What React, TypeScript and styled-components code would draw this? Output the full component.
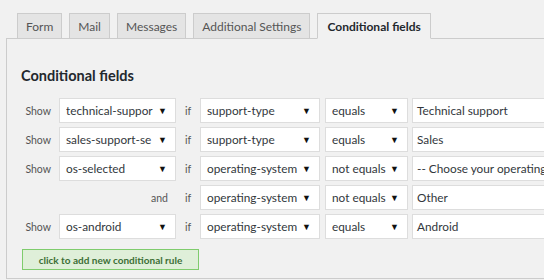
import React from 'react';
import styled, { createGlobalStyle } from 'styled-components';

const Global = createGlobalStyle`
  html, body { margin: 0; padding: 0; background: #f1f1f1; overflow: hidden; }
  body { width: 544px; height: 280px; font-family: Lato, "Open Sans", sans-serif; }
`;

const Page = styled.div`
  padding: 13px 0 0 6px;
  width: 538px;
  overflow: hidden;
`;

const TabBar = styled.div`
  display: flex;
  gap: 7px;
  padding-left: 11px;
  position: relative;
  z-index: 1;
  margin-bottom: -1px;
`;

const Tab = styled.div<{ $active?: boolean }>`
  height: 26px;
  box-sizing: border-box;
  padding: 0 ${p => (p.$active ? 9 : 8)}px;
  display: flex;
  align-items: center;
  border: 1px solid #ccc;
  border-bottom-color: ${p => (p.$active ? '#f1f1f1' : '#ccc')};
  background: ${p => (p.$active ? '#f1f1f1' : '#e4e4e4')};
  font-size: 12px;
  color: ${p => (p.$active ? '#23282d' : '#555')};
  font-weight: ${p => (p.$active ? 700 : 400)};
`;

const Panel = styled.div`
  width: 700px;
  border: 1px solid #ccc;
  border-right: none;
  padding: 27px 0 8px 14px;
`;

const Heading = styled.h2`
  margin: 0 0 12px;
  font-size: 14.5px;
  line-height: 20px;
  font-weight: 700;
  color: #23282d;
`;

const Rules = styled.div`
  display: flex;
  flex-direction: column;
  gap: 4px;
`;

const Row = styled.div`
  display: flex;
  align-items: center;
  height: 25px;
`;

const Label = styled.div<{ $w: number; $align?: string }>`
  width: ${p => p.$w}px;
  flex: none;
  box-sizing: border-box;
  text-align: ${p => p.$align || 'right'};
  padding-right: ${p => (p.$align === 'center' ? 0 : 8)}px;
  font-size: 10.5px;
  color: #555;
`;

const Select = styled.div<{ $w: number; $ml?: number }>`
  width: ${p => p.$w}px;
  margin-left: ${p => p.$ml || 0}px;
  flex: none;
  height: 25px;
  box-sizing: border-box;
  border: 1px solid #ddd;
  background: #fff;
  display: flex;
  align-items: center;
  padding: 0 8px 0 6px;
  font-size: 11.8px;
  color: #32373c;
`;

const Value = styled.span`
  flex: 1;
  overflow: hidden;
  white-space: nowrap;
`;

const Arrow = styled.span`
  font-size: 9px;
  color: #111;
  margin-left: 2px;
`;

const TextInput = styled.div`
  width: 220px;
  margin-left: 4px;
  flex: none;
  height: 25px;
  box-sizing: border-box;
  border: 1px solid #ddd;
  background: #fff;
  display: flex;
  align-items: center;
  padding: 0 4px;
  font-size: 11.8px;
  color: #32373c;
  white-space: nowrap;
  overflow: hidden;
`;

const AddButton = styled.div`
  margin: 10px 0 0 1px;
  width: 177px;
  height: 21px;
  box-sizing: border-box;
  border: 1px solid #7fcc6d;
  background: #dfefd9;
  color: #3b6e35;
  font-size: 10px;
  font-weight: 700;
  display: flex;
  align-items: center;
  justify-content: center;
`;

type Rule = { lead: 'show' | 'and'; field?: string; cond: string; op: string; val: string };

const rules: Rule[] = [
  { lead: 'show', field: 'technical-suppor', cond: 'support-type', op: 'equals', val: 'Technical support' },
  { lead: 'show', field: 'sales-support-se', cond: 'support-type', op: 'equals', val: 'Sales' },
  { lead: 'show', field: 'os-selected', cond: 'operating-system', op: 'not equals', val: '-- Choose your operating system --' },
  { lead: 'and', cond: 'operating-system', op: 'not equals', val: 'Other' },
  { lead: 'show', field: 'os-android', cond: 'operating-system', op: 'equals', val: 'Android' },
];

const tabs = ['Form', 'Mail', 'Messages', 'Additional Settings', 'Conditional fields'];

export default function App() {
  return (
    <>
      <Global />
      <Page>
        <TabBar>
          {tabs.map((t, i) => (
            <Tab key={t} $active={i === tabs.length - 1}>{t}</Tab>
          ))}
        </TabBar>
        <Panel>
          <Heading>Conditional fields</Heading>
          <Rules>
            {rules.map((r, i) => (
              <Row key={i}>
                {r.lead === 'show' ? (
                  <>
                    <Label $w={38}>Show</Label>
                    <Select $w={117}>
                      <Value>{r.field}</Value>
                      <Arrow>▼</Arrow>
                    </Select>
                  </>
                ) : (
                  <Label $w={155}>and</Label>
                )}
                <Label $w={24} $align="center">if</Label>
                <Select $w={120}>
                  <Value>{r.cond}</Value>
                  <Arrow>▼</Arrow>
                </Select>
                <Select $w={83} $ml={5}>
                  <Value>{r.op}</Value>
                  <Arrow>▼</Arrow>
                </Select>
                <TextInput>{r.val}</TextInput>
              </Row>
            ))}
          </Rules>
          <AddButton>click to add new conditional rule</AddButton>
        </Panel>
      </Page>
    </>
  );
}
